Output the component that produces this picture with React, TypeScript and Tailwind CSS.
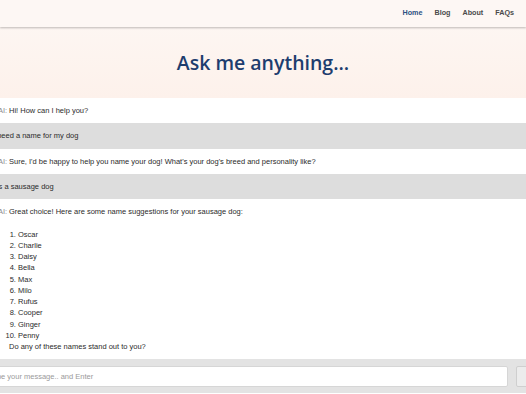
const NAMES = ["Oscar", "Charlie", "Daisy", "Bella", "Max", "Milo", "Rufus", "Cooper", "Ginger", "Penny"];

type Message = { from: "ai" | "user"; text: string };

const MESSAGES: Message[] = [
  { from: "ai", text: "Hi! How can I help you?" },
  { from: "user", text: "I need a name for my dog" },
  { from: "ai", text: "Sure, I'd be happy to help you name your dog! What's your dog's breed and personality like?" },
  { from: "user", text: "It's a sausage dog" },
];

function ChatRow({ message }: { message: Message }) {
  if (message.from === "user") {
    return (
      <div className="bg-[#dddddd] py-[7px] text-[#2b2b2b]">
        <p className="-ml-[7px]">{message.text}</p>
      </div>
    );
  }
  return (
    <div className="flex bg-white py-[7px] text-[#2b2b2b]">
      <span className="-ml-[2px] w-[11px] shrink-0 text-[#8a8a8a]">AI:</span>
      <p>{message.text}</p>
    </div>
  );
}

export default function App() {
  return (
    <div
      className="h-[394px] w-[526px] overflow-hidden bg-white"
      style={{ fontFamily: '"Liberation Sans", Arial, sans-serif' }}
    >
      <nav className="relative z-10 flex h-[27px] items-center justify-end gap-[12px] bg-[#fdf7f4] pr-[12px] text-[7.2px] font-bold shadow-[0_1px_2px_rgba(0,0,0,0.25)]">
        <a className="text-[#2c5282]">Home</a>
        <a className="text-[#4a4a4a]">Blog</a>
        <a className="text-[#4a4a4a]">About</a>
        <a className="text-[#4a4a4a]">FAQs</a>
      </nav>

      <header className="flex h-[71px] items-center justify-center bg-gradient-to-b from-[#fdf6f2] to-[#fdf1eb]">
        <h1
          className="text-[19.5px] font-semibold text-[#1d3d6e]"
          style={{ fontFamily: '"Open Sans", "Noto Sans", sans-serif' }}
        >
          Ask me anything...
        </h1>
      </header>

      <div className="text-[7.5px] leading-[11.25px]">
        {MESSAGES.map((message, index) => (
          <ChatRow key={index} message={message} />
        ))}
        <div className="flex bg-white py-[7px] text-[#2b2b2b]">
          <span className="-ml-[2px] w-[11px] shrink-0 text-[#8a8a8a]">AI:</span>
          <div>
            <p>Great choice! Here are some name suggestions for your sausage dog:</p>
            <p>&nbsp;</p>
            <ol className="list-decimal pl-[9px]">
              {NAMES.map((name) => (
                <li key={name}>{name}</li>
              ))}
            </ol>
            <p>Do any of these names stand out to you?</p>
          </div>
        </div>
      </div>

      <div className="flex h-[34px] items-center gap-[8px] bg-[#e3e3e3] py-[7px]">
        <input
          placeholder="Type your message.. and Enter"
          className="-ml-[20px] h-[21px] w-[528px] shrink-0 rounded-[2px] border border-[#d6d6d6] bg-white px-[8px] text-[7.5px] text-[#333] outline-none placeholder:text-[#9a9a9a]"
        />
        <button className="h-[21px] w-[40px] shrink-0 rounded-[2px] border border-[#cfcfcf] bg-[#ececec]" />
      </div>
    </div>
  );
}
